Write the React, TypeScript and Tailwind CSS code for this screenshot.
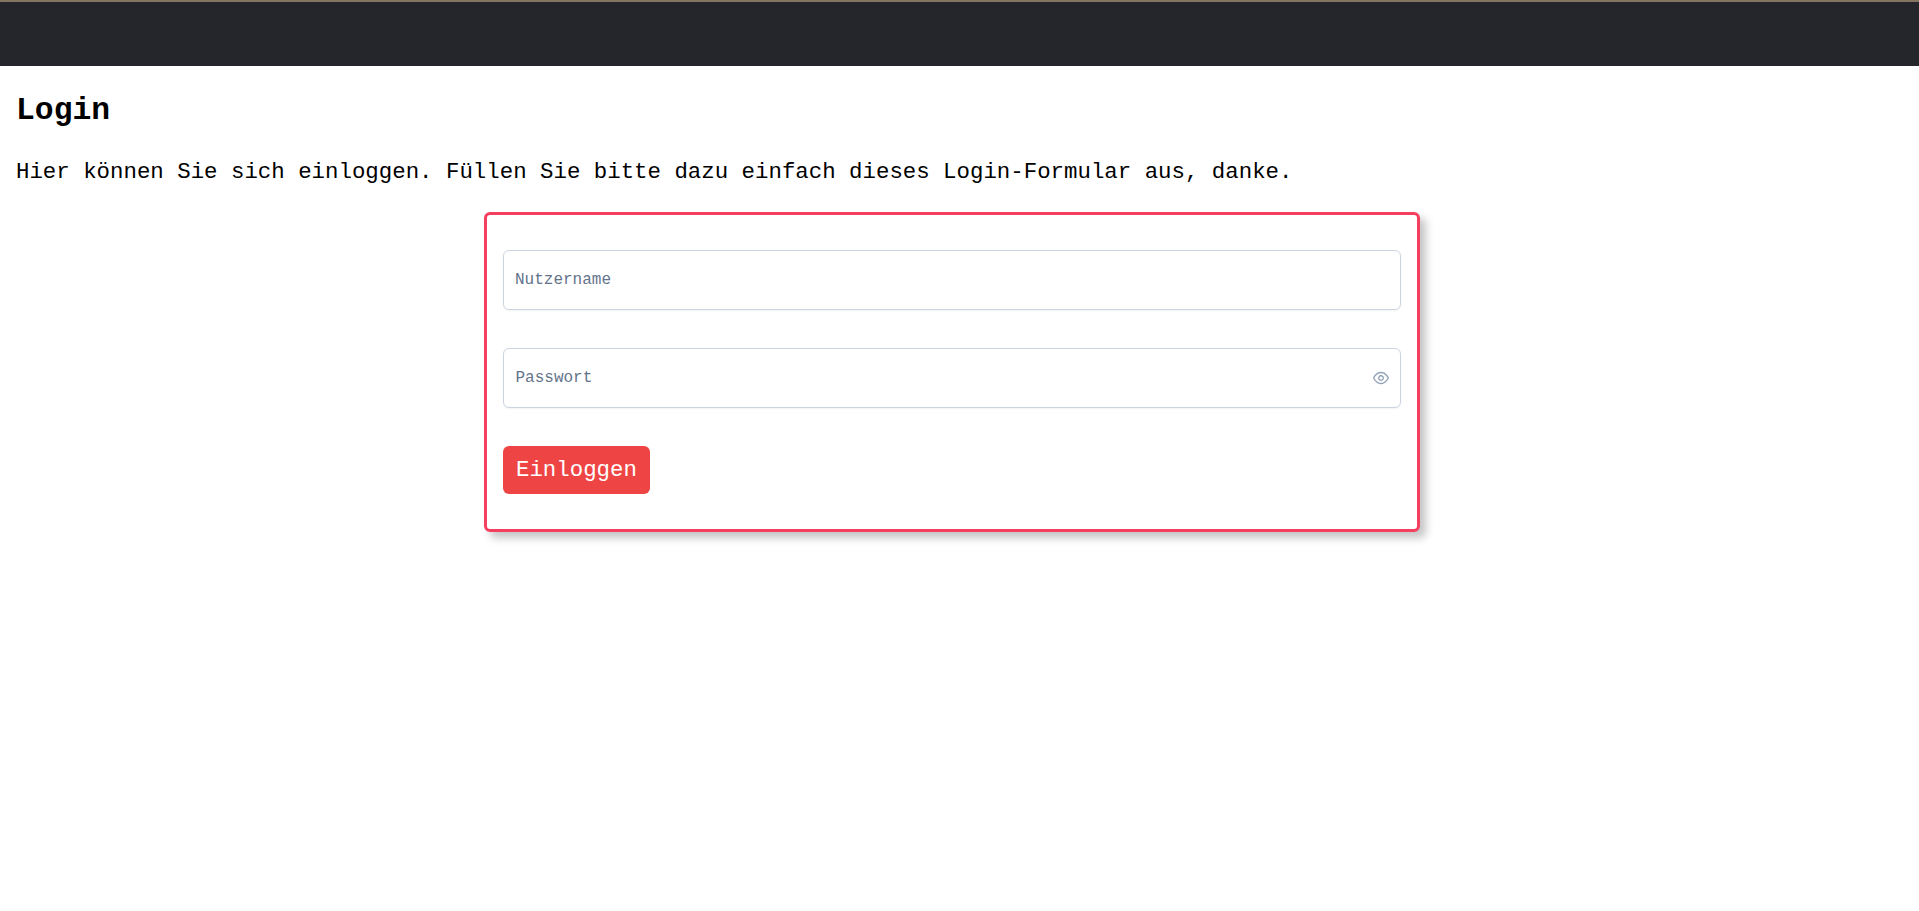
import React from "react";

function EyeIcon() {
  return (
    <svg className="h-4 w-4 text-[#94a3b8]" viewBox="0 0 14 14" fill="currentColor" aria-hidden="true">
      <path
        fillRule="evenodd"
        clipRule="evenodd"
        d="M0.0535499 7.25213C0.208567 7.59162 2.40413 12.4 7 12.4C11.5959 12.4 13.7914 7.59162 13.9465 7.25213C13.9487 7.2471 13.9506 7.24304 13.952 7.24001C13.9837 7.16396 14 7.08239 14 7.00001C14 6.91762 13.9837 6.83605 13.952 6.76001C13.9506 6.75697 13.9487 6.75292 13.9465 6.74788C13.7914 6.4084 11.5959 1.60001 7 1.60001C2.40413 1.60001 0.208567 6.40839 0.0535499 6.74788C0.0512519 6.75292 0.0494023 6.75697 0.048 6.76001C0.0163137 6.83605 0 6.91762 0 7.00001C0 7.08239 0.0163137 7.16396 0.048 7.24001C0.0494023 7.24304 0.0512519 7.2471 0.0535499 7.25213ZM7 11.2C3.664 11.2 1.736 7.92001 1.264 7.00001C1.736 6.08001 3.664 2.80001 7 2.80001C10.336 2.80001 12.264 6.08001 12.736 7.00001C12.264 7.92001 10.336 11.2 7 11.2ZM5.55551 9.16182C5.98308 9.44751 6.48576 9.6 7 9.6C7.68891 9.59789 8.349 9.32328 8.83614 8.83614C9.32328 8.349 9.59789 7.68891 9.59999 7C9.59999 6.48576 9.44751 5.98308 9.16182 5.55551C8.87612 5.12794 8.47006 4.7947 7.99497 4.59791C7.51988 4.40112 6.99711 4.34963 6.49276 4.44995C5.98841 4.55027 5.52513 4.7979 5.16152 5.16152C4.7979 5.52513 4.55027 5.98841 4.44995 6.49276C4.34963 6.99711 4.40112 7.51988 4.59791 7.99497C4.7947 8.47006 5.12794 8.87612 5.55551 9.16182ZM6.2222 5.83594C6.45243 5.6821 6.7231 5.6 7 5.6C7.37065 5.6021 7.72553 5.75027 7.98762 6.01237C8.24972 6.27446 8.39789 6.62934 8.4 7C8.4 7.27689 8.31789 7.54756 8.16405 7.77779C8.01022 8.00802 7.79157 8.18746 7.53575 8.29343C7.27994 8.39939 6.99844 8.42711 6.72687 8.37309C6.4553 8.31908 6.20584 8.18574 6.01005 7.98994C5.81425 7.79415 5.68091 7.54469 5.6269 7.27312C5.57288 7.00155 5.6006 6.72006 5.70656 6.46424C5.81253 6.20842 5.99197 5.98977 6.2222 5.83594Z"
      />
    </svg>
  );
}

const field =
  "h-[60px] w-full rounded-md border border-[#cbd5e1] bg-white text-base text-[#334155] shadow-[0_1px_2px_rgba(18,18,23,0.05)] outline-none placeholder:text-[#64748b] placeholder:opacity-100";

export default function App() {
  return (
    <div className="min-h-screen bg-white font-['Courier_New','Liberation_Mono',monospace] text-[22.4px] text-black">
      <nav className="h-[66px] border-t-2 border-[#83755f] bg-[#25262b]" />
      <main className="flex flex-col px-4">
        <h1 className="mt-[27px] text-[31.36px] leading-9 font-bold">Login</h1>
        <p className="mt-[27px] leading-8">
          Hier können Sie sich einloggen. Füllen Sie bitte dazu einfach dieses Login-Formular aus, danke.
        </p>
        <form
          className="mt-6 ml-[468px] flex h-[320px] w-[936px] flex-col items-start gap-[38px] rounded-md border-3 border-[#f43f5e] bg-white px-4 pt-[35px] shadow-[6px_6px_8px_rgba(0,0,0,0.23)]"
          onSubmit={(e) => e.preventDefault()}
        >
          <input className={`${field} px-[11px]`} placeholder="Nutzername" />
          <div className={`${field} flex items-center pr-[11px] pl-[11.5px]`}>
            <input
              type="password"
              className="min-w-0 flex-1 outline-none placeholder:text-[#64748b] placeholder:opacity-100"
              placeholder="Passwort"
            />
            <EyeIcon />
          </div>
          <button type="submit" className="h-12 rounded-md bg-[#ef4444] px-[13px] leading-8 text-white">
            Einloggen
          </button>
        </form>
      </main>
    </div>
  );
}
